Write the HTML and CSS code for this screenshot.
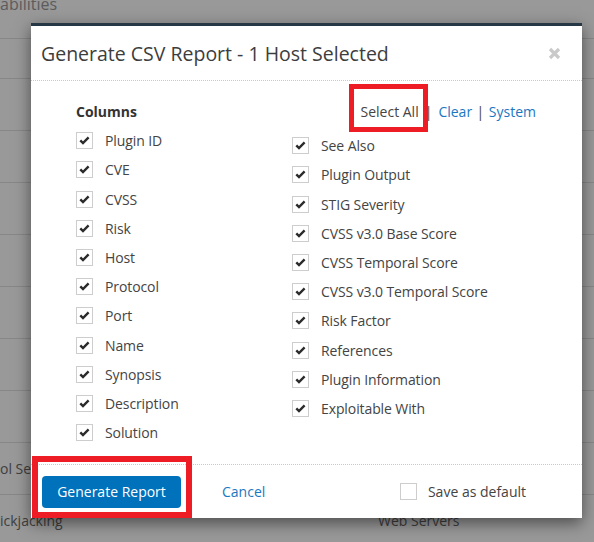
FILE: index.html
```html
<!DOCTYPE html>
<html lang="en">
<head>
<meta charset="utf-8">
<title>Generate CSV Report</title>
<link rel="stylesheet" href="styles.css">
</head>
<body>
<div class="page">
  <div class="page-title"><span class="page-title-text">abilities</span></div>
  <div class="grid-row short"></div>
  <div class="grid-row"></div>
  <div class="grid-row"></div>
  <div class="grid-row"></div>
  <div class="grid-row"></div>
  <div class="grid-row"></div>
  <div class="grid-row"></div>
  <div class="grid-row"></div>
  <div class="grid-row"><span class="cell-a">ol Services</span></div>
  <div class="grid-row"><span class="cell-a">ickjacking</span><span class="cell-b">Web Servers</span></div>
</div>
<div class="backdrop"></div>

<div class="modal">
  <div class="modal-header">
    <h4 class="modal-title">Generate CSV Report - 1 Host Selected</h4>
    <button class="close" type="button" aria-label="Close">
      <svg width="13" height="13" viewBox="0 0 13 13"><path d="M2 2 L11 11 M11 2 L2 11" stroke="#cacaca" stroke-width="3.2" fill="none"/></svg>
    </button>
  </div>

  <div class="modal-body">
    <div class="col col-left">
      <div class="col-title">Columns</div>
      <label class="opt"><span class="cb"><svg viewBox="0 0 17 17"><polyline points="4.3,8.3 7,11 12.6,5.4" /></svg></span>Plugin ID</label>
      <label class="opt"><span class="cb"><svg viewBox="0 0 17 17"><polyline points="4.3,8.3 7,11 12.6,5.4" /></svg></span>CVE</label>
      <label class="opt"><span class="cb"><svg viewBox="0 0 17 17"><polyline points="4.3,8.3 7,11 12.6,5.4" /></svg></span>CVSS</label>
      <label class="opt"><span class="cb"><svg viewBox="0 0 17 17"><polyline points="4.3,8.3 7,11 12.6,5.4" /></svg></span>Risk</label>
      <label class="opt"><span class="cb"><svg viewBox="0 0 17 17"><polyline points="4.3,8.3 7,11 12.6,5.4" /></svg></span>Host</label>
      <label class="opt"><span class="cb"><svg viewBox="0 0 17 17"><polyline points="4.3,8.3 7,11 12.6,5.4" /></svg></span>Protocol</label>
      <label class="opt"><span class="cb"><svg viewBox="0 0 17 17"><polyline points="4.3,8.3 7,11 12.6,5.4" /></svg></span>Port</label>
      <label class="opt"><span class="cb"><svg viewBox="0 0 17 17"><polyline points="4.3,8.3 7,11 12.6,5.4" /></svg></span>Name</label>
      <label class="opt"><span class="cb"><svg viewBox="0 0 17 17"><polyline points="4.3,8.3 7,11 12.6,5.4" /></svg></span>Synopsis</label>
      <label class="opt"><span class="cb"><svg viewBox="0 0 17 17"><polyline points="4.3,8.3 7,11 12.6,5.4" /></svg></span>Description</label>
      <label class="opt"><span class="cb"><svg viewBox="0 0 17 17"><polyline points="4.3,8.3 7,11 12.6,5.4" /></svg></span>Solution</label>
    </div>
    <div class="col col-right">
      <div class="actions"><a class="act act-plain">Select All</a><span class="sep">|</span><a class="act">Clear</a><span class="sep sep-tight">|</span><a class="act">System</a></div>
      <label class="opt"><span class="cb"><svg viewBox="0 0 17 17"><polyline points="4.3,8.3 7,11 12.6,5.4" /></svg></span>See Also</label>
      <label class="opt"><span class="cb"><svg viewBox="0 0 17 17"><polyline points="4.3,8.3 7,11 12.6,5.4" /></svg></span>Plugin Output</label>
      <label class="opt"><span class="cb"><svg viewBox="0 0 17 17"><polyline points="4.3,8.3 7,11 12.6,5.4" /></svg></span>STIG Severity</label>
      <label class="opt"><span class="cb"><svg viewBox="0 0 17 17"><polyline points="4.3,8.3 7,11 12.6,5.4" /></svg></span>CVSS v3.0 Base Score</label>
      <label class="opt"><span class="cb"><svg viewBox="0 0 17 17"><polyline points="4.3,8.3 7,11 12.6,5.4" /></svg></span>CVSS Temporal Score</label>
      <label class="opt"><span class="cb"><svg viewBox="0 0 17 17"><polyline points="4.3,8.3 7,11 12.6,5.4" /></svg></span>CVSS v3.0 Temporal Score</label>
      <label class="opt"><span class="cb"><svg viewBox="0 0 17 17"><polyline points="4.3,8.3 7,11 12.6,5.4" /></svg></span>Risk Factor</label>
      <label class="opt"><span class="cb"><svg viewBox="0 0 17 17"><polyline points="4.3,8.3 7,11 12.6,5.4" /></svg></span>References</label>
      <label class="opt"><span class="cb"><svg viewBox="0 0 17 17"><polyline points="4.3,8.3 7,11 12.6,5.4" /></svg></span>Plugin Information</label>
      <label class="opt"><span class="cb"><svg viewBox="0 0 17 17"><polyline points="4.3,8.3 7,11 12.6,5.4" /></svg></span>Exploitable With</label>
    </div>
  </div>

  <div class="modal-footer">
    <button class="btn-primary" type="button">Generate Report</button>
    <a class="cancel">Cancel</a>
    <label class="save"><span class="cb cb-empty"></span>Save as default</label>
  </div>

  <div class="mark mark-select"></div>
  <div class="mark mark-generate"></div>
</div>
</body>
</html>
```

FILE: styles.css
```css
* { box-sizing: border-box; }

html, body {
  margin: 0;
  padding: 0;
  width: 594px;
  height: 542px;
  overflow: hidden;
}

body {
  font-family: "Open Sans", "Noto Sans", sans-serif;
  background: #ffffff;
  color: #444;
  position: relative;
}

/* ---------- page behind the dialog ---------- */
.page {
  font-size: 14px;
  color: #6a6a6a;
}

.page-title {
  height: 39px;
  border-bottom: 1px solid #e2e2e2;
  overflow: hidden;
}

.page-title-text {
  display: block;
  margin-top: -4px;
  font-size: 16px;
  line-height: 16px;
  color: #9a9a9a;
}

.grid-row {
  height: 52px;
  border-bottom: 1px solid #e2e2e2;
  display: flex;
  align-items: center;
}

.grid-row.short { height: 40px; }

.cell-a { width: 378px; }

/* ---------- backdrop ---------- */
.backdrop {
  position: absolute;
  inset: 0;
  background: rgba(0, 0, 0, 0.4);
}

/* ---------- modal ---------- */
.modal {
  position: absolute;
  left: 31px;
  top: 23px;
  width: 551px;
  height: 495px;
  background: #fff;
  border-top: 3px solid #263746;
  box-shadow: 0 5px 15px rgba(0, 0, 0, 0.5);
  display: flex;
  flex-direction: column;
}

.modal-header {
  height: 55px;
  padding: 1px 21px 0 10px;
  border-bottom: 1px dotted #c9c9c9;
  display: flex;
  align-items: center;
  justify-content: space-between;
}

.modal-title {
  margin: 0;
  font-size: 19.5px;
  line-height: 20px;
  font-weight: 400;
  color: #3d3d3d;
}

.close {
  border: 0;
  background: none;
  padding: 0;
  width: 13px;
  height: 13px;
  display: block;
}
.close svg { display: block; }

.modal-body {
  flex: 1;
  padding: 16px 46px 0 45px;
  display: flex;
}

.col-left { width: 216px; }
.col-right { flex: 1; }

.col-title,
.actions {
  height: 29.2px;
  line-height: 29.2px;
  font-size: 14px;
}

.col-title {
  font-weight: 700;
  color: #333;
}

.actions {
  text-align: right;
  margin-bottom: 5px;
}

.act {
  color: #1a78c2;
  text-decoration: none;
}
.act-plain { color: #444; }

.sep {
  margin: 0 6px;
  color: #444;
}
.sep-tight { margin: 0 4.5px; }

.opt {
  height: 29.2px;
  display: flex;
  align-items: center;
  gap: 12px;
  font-size: 14px;
  letter-spacing: -0.1px;
  color: #444;
}

.cb {
  width: 17px;
  height: 17px;
  flex: none;
  border: 1px solid #cdcdcd;
  background: #fff;
  display: block;
  position: relative;
}

.cb svg {
  position: absolute;
  left: -1px;
  top: -1px;
  width: 17px;
  height: 17px;
  fill: none;
  stroke: #2b2b2b;
  stroke-width: 2.4;
}

/* ---------- footer ---------- */
.modal-footer {
  height: 54px;
  border-top: 1px dotted #c9c9c9;
  padding: 0 56px 0 11px;
  display: flex;
  align-items: center;
}

.btn-primary {
  width: 139px;
  height: 32px;
  border: 0;
  border-radius: 4px;
  background: #0071bb;
  color: #fff;
  font-family: inherit;
  font-size: 14px;
  padding: 0;
}

.cancel {
  margin-left: 41px;
  color: #1a78c2;
  font-size: 14px;
}

.save {
  margin-left: auto;
  display: flex;
  align-items: center;
  gap: 11px;
  font-size: 14px;
  color: #444;
}

/* ---------- red annotation boxes ---------- */
.mark {
  position: absolute;
  border: 5px solid #ee1c25;
}

.mark-select {
  left: 318px;
  top: 58px;
  width: 79px;
  height: 48px;
}

.mark-generate {
  left: 1px;
  top: 430px;
  width: 160px;
  height: 62px;
  border-width: 6px;
}
```
